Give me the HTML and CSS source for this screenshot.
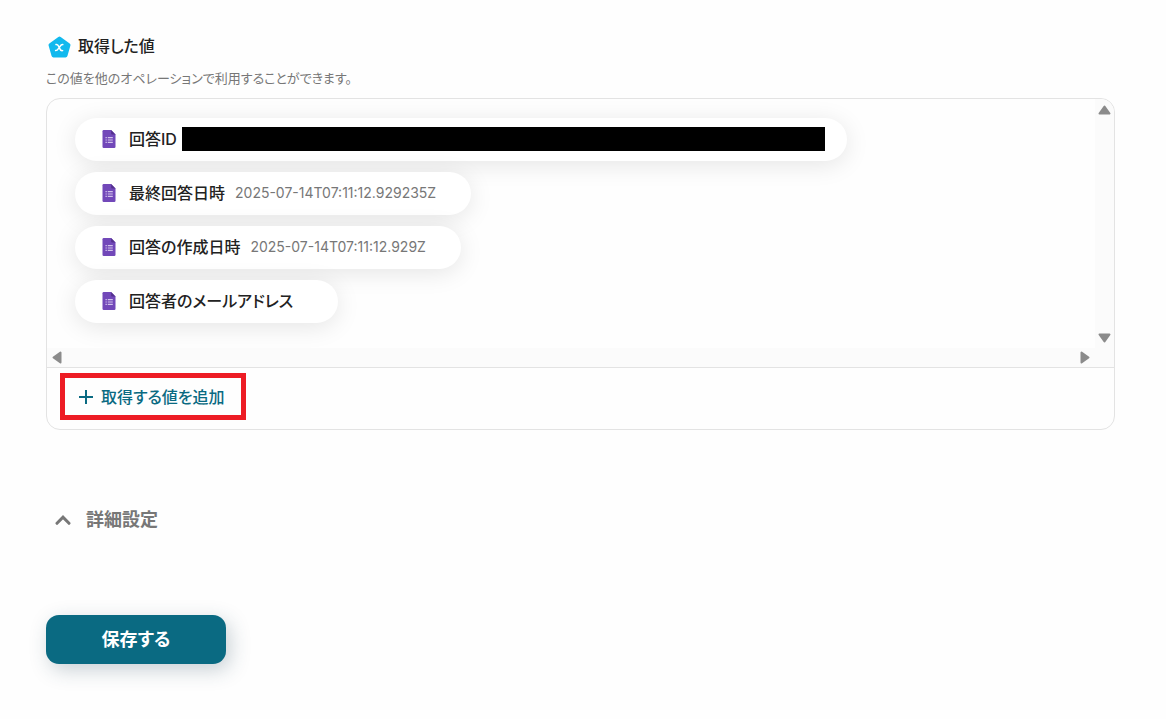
FILE: index.html
```html
<!DOCTYPE html>
<html lang="ja">
  <head>
    <meta charset="UTF-8" />
    <meta name="viewport" content="width=device-width, initial-scale=1.0" />
    <title>取得した値</title>
    <link rel="stylesheet" href="styles.css">
  </head>
  <body>
    <!-- アイコン定義 -->
    <svg class="sprite" aria-hidden="true">
      <symbol id="icon-form" viewBox="0 0 13 18">
        <path d="M1.2 0H8.6L13 4.4V16.8Q13 18 11.8 18H1.2Q0 18 0 16.8V1.2Q0 0 1.2 0Z" fill="#7248b9" />
        <path d="M8.6 0L13 4.4H9.6Q8.6 4.4 8.6 3.4Z" fill="#54308f" />
        <path d="M3 7H4.3V8.2H3ZM5.3 7H10.3V8.2H5.3ZM3 9.4H4.3V10.6H3ZM5.3 9.4H10.3V10.6H5.3ZM3 11.8H4.3V13H3ZM5.3 11.8H10.3V13H5.3Z" fill="#d3c4ec" />
      </symbol>
    </svg>

    <main class="page">
      <section class="values">
        <div class="heading">
          <svg class="heading-icon" viewBox="0 0 24 24" aria-hidden="true">
            <path d="M12.5 4.5L21.5 11L18.5 21.5H6.5L3.5 11Z" fill="#12b9ee" stroke="#12b9ee" stroke-width="4" stroke-linejoin="round" />
            <path d="M9 10.6C11 10.1 11.4 11.6 12.2 13.5C13 15.4 13.4 17.2 15.6 16.6M15.8 10.6C14 10.4 13.2 12.2 12.2 13.5C11.2 14.8 10.4 16.8 8.6 16.6" fill="none" stroke="#fff" stroke-width="1.5" stroke-linecap="round" />
          </svg>
          <h2>取得した値</h2>
        </div>
        <p class="description">この値を他のオペレーションで利用することができます。</p>

        <div class="panel">
          <div class="scroll-box">
            <ul class="chips">
              <li class="chip">
                <svg class="form-icon" aria-hidden="true"><use href="#icon-form" /></svg>
                <span class="name">回答ID</span>
                <span class="masked"></span>
              </li>
              <li class="chip">
                <svg class="form-icon" aria-hidden="true"><use href="#icon-form" /></svg>
                <span class="name">最終回答日時</span>
                <span class="value">2025-07-14T07:11:12.929235Z</span>
              </li>
              <li class="chip">
                <svg class="form-icon" aria-hidden="true"><use href="#icon-form" /></svg>
                <span class="name">回答の作成日時</span>
                <span class="value">2025-07-14T07:11:12.929Z</span>
              </li>
              <li class="chip">
                <svg class="form-icon" aria-hidden="true"><use href="#icon-form" /></svg>
                <span class="name">回答者のメールアドレス</span>
                <span class="value"></span>
              </li>
            </ul>
            <!-- スクロールバー -->
            <div class="bar bar-y">
              <button type="button" aria-label="上へ">
                <svg width="13" height="10" viewBox="0 0 13 10"><path d="M6.5 1.5L11.5 8.5H1.5Z" /></svg>
              </button>
              <button type="button" aria-label="下へ">
                <svg width="13" height="10" viewBox="0 0 13 10"><path d="M6.5 8.5L11.5 1.5H1.5Z" /></svg>
              </button>
            </div>
            <div class="bar bar-x">
              <button type="button" aria-label="左へ">
                <svg width="10" height="13" viewBox="0 0 10 13"><path d="M1.5 6.5L8.5 1.5V11.5Z" /></svg>
              </button>
              <button type="button" aria-label="右へ">
                <svg width="10" height="13" viewBox="0 0 10 13"><path d="M8.5 6.5L1.5 1.5V11.5Z" /></svg>
              </button>
            </div>
          </div>
          <div class="panel-footer">
            <button type="button" class="add-button">
              <svg width="16" height="16" viewBox="0 0 16 16" aria-hidden="true"><path d="M8 1V15M1 8H15" /></svg>
              取得する値を追加
            </button>
          </div>
        </div>
      </section>

      <button type="button" class="advanced">
        <svg width="16" height="10" viewBox="0 0 16 10" aria-hidden="true"><path d="M2 8.3L8 2.2L14 8.3" /></svg>
        詳細設定
      </button>

      <button type="button" class="save">保存する</button>
    </main>
  </body>
</html>
```

FILE: styles.css
```css
* {
  margin: 0;
  padding: 0;
  box-sizing: border-box;
}

body {
  background-color: #fefefe;
  color: #222;
  font-family: Inter, "Noto Sans CJK JP", sans-serif;
  font-size: 16px;
  line-height: 24px;
  font-feature-settings: "palt";
}

button {
  border: none;
  background: none;
  font: inherit;
  font-feature-settings: inherit;
  cursor: pointer;
}

.sprite {
  display: block;
  width: 0;
  height: 0;
}

.page {
  display: flex;
  flex-direction: column;
  align-items: flex-start;
  padding: 34px 51px 48px 46px;
}

.values {
  width: 100%;
}

/* 見出し */
.heading {
  display: flex;
  align-items: center;
  gap: 7px;
  padding-left: 1px;
}

.heading-icon {
  width: 24px;
  height: 24px;
}

.heading h2 {
  font-size: 16px;
  font-weight: 500;
}

.description {
  margin: 12px 0;
  color: #777;
  font-size: 13px;
  line-height: 16px;
}

.panel {
  border: 1px solid #e3e3e3;
  border-radius: 14px;
}

.scroll-box {
  display: grid;
  grid-template-columns: 1fr 19px;
  border-bottom: 1px solid #e3e3e3;
}

/* 値の一覧 */
.chips {
  display: flex;
  flex-direction: column;
  align-items: flex-start;
  gap: 11px;
  padding: 19px 28px 25px;
  overflow: hidden;
  list-style: none;
}

.chip {
  display: flex;
  align-items: center;
  height: 43px;
  padding: 0 35px 2px 27px;
  border-radius: 22px;
  background-color: #fff;
  box-shadow: 0 4px 24px rgba(0, 0, 0, 0.1);
}

.chip:first-child {
  padding-right: 22px;
}

.form-icon {
  width: 14px;
  height: 18px;
  margin-right: 13px;
}

.name {
  font-weight: 500;
}

.value {
  margin-left: 10px;
  color: #777;
  font-size: 14px;
}

.masked {
  width: 643px;
  height: 24px;
  margin-left: 5px;
  background-color: #000;
}

/* スクロールバー */
.bar {
  display: flex;
  justify-content: space-between;
  background-color: #fbfbfb;
}

.bar button {
  display: flex;
}

.bar path {
  fill: #8b8b8b;
  stroke: #8b8b8b;
  stroke-width: 2;
  stroke-linejoin: round;
}

.bar-y {
  flex-direction: column;
  align-items: center;
  padding: 6px 0 5px;
  border-top-right-radius: 14px;
}

.bar-x {
  grid-column: 1 / -1;
  align-items: center;
  height: 19px;
  padding: 0 24px 0 5px;
}

.panel-footer {
  padding: 5px 13px 9px;
}

.add-button {
  display: flex;
  align-items: center;
  gap: 7px;
  height: 47px;
  padding: 0 16px 0 13px;
  border: 5px solid #ed1c24;
  color: #0a6a82;
  font-weight: 500;
}

.add-button path {
  fill: none;
  stroke: #0a6a82;
  stroke-width: 2;
}

/* 詳細設定 */
.advanced {
  display: flex;
  align-items: center;
  gap: 15px;
  margin-top: 78px;
  padding-left: 9px;
  color: #777;
  font-size: 18px;
  font-weight: 600;
}

.advanced path {
  fill: none;
  stroke: #777;
  stroke-width: 3;
  stroke-linecap: round;
}

.save {
  width: 180px;
  height: 49px;
  margin-top: 83px;
  border-radius: 13px;
  background-color: #0a6a82;
  box-shadow: 4px 6px 20px rgba(40, 70, 90, 0.25);
  color: #fff;
  font-size: 18px;
  font-weight: 700;
}
```
